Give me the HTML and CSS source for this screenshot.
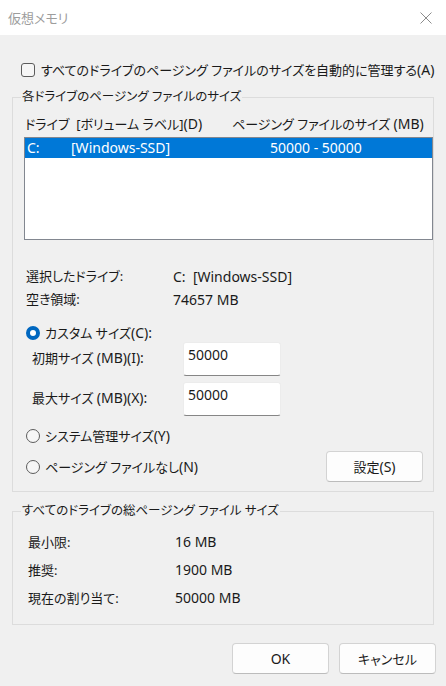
FILE: index.html
```html
<!DOCTYPE html>
<html lang="ja">
<head>
<meta charset="utf-8">
<title>仮想メモリ</title>
<link rel="stylesheet" href="styles.css">
</head>
<body>
<div class="window">
  <div class="titlebar">
    <span class="title">仮想メモリ</span>
    <svg class="close" width="12" height="12" viewBox="0 0 12 12"><path d="M0.5 0.5 L11.5 11.5 M11.5 0.5 L0.5 11.5" stroke="#8c8c8c" stroke-width="1" fill="none"/></svg>
  </div>
  <div class="content">
    <div class="check-row"><span class="checkbox"></span><span>すべてのドライブのページング ファイルのサイズを自動的に管理する<span class="n">(A)</span></span></div>

    <fieldset class="group group-drives">
      <legend>各ドライブのページング ファイルのサイズ</legend>
      <div class="list-head"><span class="col-drive">ドライブ&nbsp; [ボリューム ラベル]<span class="n">(D)</span></span><span>ページング ファイルのサイズ <span class="n">(MB)</span></span></div>
      <div class="listbox">
        <div class="list-row selected"><span class="c1">C:</span><span class="c2">[Windows-SSD]</span><span>50000 - 50000</span></div>
      </div>
      <div class="info">
        <div class="info-row"><span class="key">選択したドライブ:</span><span class="n">C:&nbsp; [Windows-SSD]</span></div>
        <div class="info-row"><span class="key">空き領域:</span><span class="n">74657 MB</span></div>
      </div>
      <div class="radio-row custom"><span class="radio checked"></span><span>カスタム サイズ<span class="n">(C):</span></span></div>
      <div class="field-row first"><span class="field-label">初期サイズ <span class="n">(MB)(I):</span></span><div class="edit">50000</div></div>
      <div class="field-row second"><span class="field-label">最大サイズ <span class="n">(MB)(X):</span></span><div class="edit">50000</div></div>
      <div class="radio-row system"><span class="radio"></span><span>システム管理サイズ<span class="n">(Y)</span></span></div>
      <div class="radio-row none"><span class="radio"></span><span>ページング ファイルなし<span class="n">(N)</span></span><button class="btn set">設定<span class="n">(S)</span></button></div>
    </fieldset>

    <fieldset class="group group-total">
      <legend>すべてのドライブの総ページング ファイル サイズ</legend>
      <div class="total-row"><span class="key">最小限:</span><span class="n">16 MB</span></div>
      <div class="total-row"><span class="key">推奨:</span><span class="n">1900 MB</span></div>
      <div class="total-row"><span class="key">現在の割り当て:</span><span class="n">50000 MB</span></div>
    </fieldset>

    <div class="buttons">
      <button class="btn"><span class="n">OK</span></button>
      <button class="btn">キャンセル</button>
    </div>
  </div>
</div>
</body>
</html>
```

FILE: styles.css
```css
* { box-sizing: border-box; }

html, body {
  margin: 0;
  padding: 0;
}

body {
  width: 446px;
  height: 686px;
  background: #f0f0f0;
  font-family: "Noto Sans", "Noto Sans CJK JP", sans-serif;
  font-size: 13px;
  font-feature-settings: "palt";
  color: #1a1a1a;
  overflow: hidden;
}

/* Latin runs (digits, parentheses, drive names) are set larger than the kana/kanji */
.n { font-size: 14px; }

.window {
  width: 446px;
  height: 686px;
  display: flex;
  flex-direction: column;
}

.titlebar {
  height: 35px;
  background: #ffffff;
  display: flex;
  align-items: center;
  justify-content: space-between;
  padding: 1px 14px 0 8px;
}

.title {
  color: #9d9d9d;
  font-size: 13px;
  line-height: 20px;
}

.close { display: block; }

.content {
  flex: 1;
  display: flex;
  flex-direction: column;
}

.check-row {
  margin-top: 25px;
  padding-left: 21px;
  height: 20px;
  line-height: 20px;
  display: flex;
  align-items: center;
  gap: 6px;
  white-space: nowrap;
}

.checkbox {
  width: 14px;
  height: 14px;
  border: 1px solid #5c5c5c;
  border-radius: 3px;
  background: #f6f6f6;
  flex: none;
}

.group {
  margin: 0 0 0 12px;
  width: 422px;
  padding: 0;
  border: 1px solid #dcdcdc;
  min-inline-size: auto;
}

.group legend {
  margin-left: 8px;
  padding: 0 1px;
  font-size: 12.5px;
  line-height: 16px;
  white-space: nowrap;
}

.group-drives {
  margin-top: 9px;
  padding-bottom: 9px;
}

.list-head {
  margin-top: 9px;
  height: 20px;
  line-height: 20px;
  padding-left: 12px;
  display: flex;
  white-space: nowrap;
}

.col-drive { width: 207px; }

.listbox {
  margin: 3px 0 0 11px;
  height: 103px;
  border: 1px solid #828790;
  background: #ffffff;
}

.list-row {
  height: 20px;
  line-height: 20px;
  padding-left: 2px;
  display: flex;
  white-space: nowrap;
  font-size: 14px;
}

.list-row.selected {
  background: #0078d7;
  color: #ffffff;
}

.c1 { width: 44px; }
.c2 { width: 199px; }

.info { margin-top: 25px; }

.info-row {
  height: 23px;
  line-height: 23px;
  padding-left: 13px;
  display: flex;
  white-space: nowrap;
}

.info-row .key { width: 147px; }

.radio-row {
  display: flex;
  align-items: center;
  padding-left: 13px;
  gap: 5px;
  white-space: nowrap;
  line-height: 20px;
}

.radio-row.custom { margin-top: 13px; height: 18px; }
.radio-row.system { margin-top: 10px; height: 20px; }
.radio-row.none { margin-top: 5px; height: 31px; }

.radio {
  width: 14px;
  height: 14px;
  border-radius: 50%;
  border: 1px solid #5c5c5c;
  background: #f6f6f6;
  flex: none;
}

.radio.checked {
  border: 4px solid #0067c0;
  background: #ffffff;
}

.field-row {
  display: flex;
  align-items: center;
  padding-left: 19px;
  white-space: nowrap;
}

.field-row.second { margin-top: 6px; }

.field-label {
  width: 151px;
  line-height: 20px;
  padding-bottom: 3px;
}

.edit {
  width: 98px;
  height: 34px;
  background: #ffffff;
  border: 1px solid #ececec;
  border-bottom: 1px solid #868686;
  border-radius: 3px;
  padding: 2px 0 0 4px;
  line-height: 20px;
  font-size: 14px;
}

.btn {
  font: inherit;
  color: #1a1a1a;
  background: #fdfdfd;
  border: 1px solid #d3d3d3;
  border-bottom-color: #bcbcbc;
  border-radius: 4px;
  height: 31px;
  width: 97px;
  padding: 0;
  line-height: 20px;
}

.btn.set {
  margin-left: auto;
  margin-right: 10px;
}

.group-total {
  margin-top: 11px;
  padding-bottom: 12px;
}

.total-row {
  height: 28px;
  line-height: 28px;
  padding-left: 15px;
  display: flex;
  white-space: nowrap;
}

.total-row:first-of-type { margin-top: 9px; }

.total-row .key { width: 147px; }

.buttons {
  margin-top: 18px;
  display: flex;
  justify-content: flex-end;
  gap: 10px;
  padding-right: 10px;
}
```
